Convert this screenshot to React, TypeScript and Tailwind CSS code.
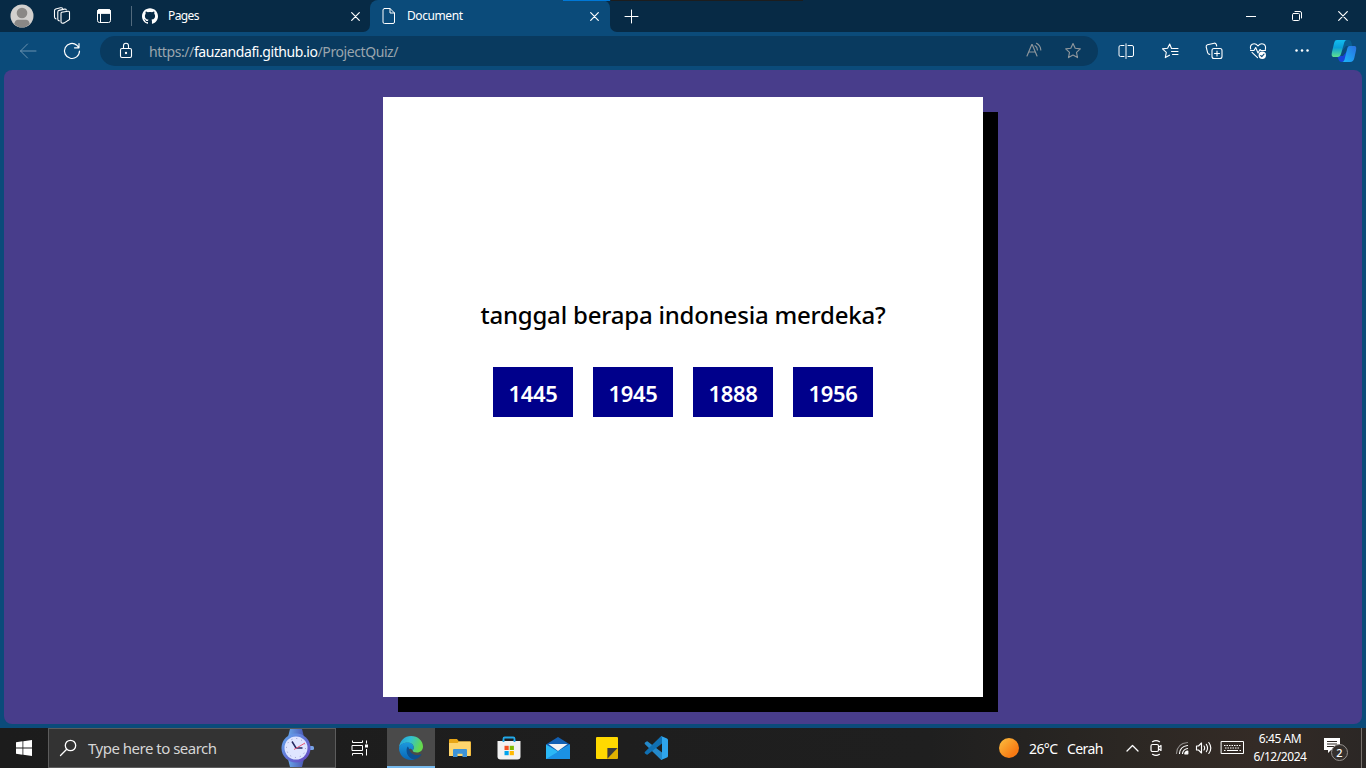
import React from "react";
import { SiGithub } from "react-icons/si";

type IconProps = { w: number; h?: number; className?: string; sw?: number; children: React.ReactNode };

function Icon({ w, h = w, className = "", sw = 1, children }: IconProps) {
  return (
    <svg
      width={w}
      height={h}
      viewBox={`0 0 ${w} ${h}`}
      fill="none"
      stroke="currentColor"
      strokeWidth={sw}
      strokeLinecap="round"
      strokeLinejoin="round"
      className={`block shrink-0 ${className}`}
    >
      {children}
    </svg>
  );
}

function CloseIcon({ size }: { size: number }) {
  return (
    <Icon w={size} sw={1.2}>
      <path d={`M.7.7 ${size - 0.7} ${size - 0.7}M${size - 0.7}.7.7 ${size - 0.7}`} />
    </Icon>
  );
}

function TabStrip() {
  return (
    <div className="flex h-8 bg-[#0b4b7a] text-white">
      <div className="flex h-8 w-[370px] items-center rounded-br-[7px] bg-[#072a45]">
        <div className="flex w-11 justify-center">
          <svg width="24" height="24" viewBox="0 0 24 24" className="block">
            <circle cx="12" cy="12" r="11.5" fill="#d2d0ce" />
            <circle cx="12" cy="9" r="5.3" fill="#8a8886" />
            <path d="M4.2 20.3C4.6 17 6.3 15.8 8 15.8h8c1.7 0 3.4 1.2 3.8 4.5A11.5 11.5 0 0 1 4.2 20.3Z" fill="#8a8886" />
          </svg>
        </div>
        <div className="flex w-9 justify-center">
          <Icon w={18} sw={1.1}>
            <path d="M8.8 5.3 14.8 4.2Q16.5 4 16.5 5.6V12.5L11.3 15.9Q8 16.8 8 14.8V6.5Q8 5.5 8.8 5.3Z" />
            <path d="M6.3 13.9Q4.8 13.6 4.8 12V5Q4.8 3.7 6 3.4L11.5 2.1Q13 1.9 13.3 3" />
            <path d="M3.1 11.9Q1.5 11.4 1.5 10V3.7Q1.5 2.4 2.7 2L7.5.8Q9 .5 9.6 1.3" />
          </Icon>
        </div>
        <div className="flex w-12 justify-center">
          <Icon w={16}>
            <rect x="1.5" y="1.5" width="13" height="13" rx="2" />
            <path d="M1.5 5V3.5a2 2 0 0 1 2-2h9a2 2 0 0 1 2 2V5Z" fill="currentColor" />
            <path d="M4.5 5v9" />
          </Icon>
        </div>
        <div className="ml-[3px] h-5 w-px bg-[#526a7d]" />
        <SiGithub className="ml-2.5 h-4 w-4 shrink-0" />
        <span className="ml-2.5 flex-1 text-[12px] tracking-[-0.6px]">Pages</span>
        <div className="mr-2.5">
          <CloseIcon size={9} />
        </div>
      </div>
      <div className="relative flex h-8 w-60 items-center bg-[linear-gradient(to_bottom,#072a45_50%,#0b4b7a_50%)]">
        <div className="flex h-8 w-full items-center rounded-t-[8px] bg-[#0b4b7a]">
          <Icon w={14} h={18} className="ml-3">
            <path d="M2.5 1.5H8L12.5 6v9a1.500 1.500 0 0 1-1.500 1.500H2.500A1.500 1.500 0 0 1 1 15V3A1.500 1.500 0 0 1 2.500 1.500ZM8 1.500V6h4.500" />
          </Icon>
          <span className="ml-[11px] flex-1 text-[12px] tracking-[-0.42px]">Document</span>
          <div className="mr-[11px]">
            <CloseIcon size={9} />
          </div>
        </div>
        <div className="absolute top-0 right-[-1px] h-px w-12 bg-[#0078d7]" />
      </div>
      <div className="relative flex h-8 flex-1 items-center rounded-bl-[7px] bg-[#072a45]">
        <div className="absolute top-0 left-px h-px w-[192px] bg-[#1d1d1d]" />
        <Icon w={15} className="ml-3.5">
          <path d="M7.5 1v13M1 7.5h13" />
        </Icon>
        <div className="ml-auto flex">
          <div className="flex w-[46px] items-center justify-center">
            <div className="h-px w-2.5 bg-white" />
          </div>
          <div className="flex w-[46px] items-center justify-center">
            <Icon w={12}>
              <rect x="1.5" y="3.5" width="7" height="7" rx="1" />
              <path d="M4 1.500h5a1.500 1.500 0 0 1 1.500 1.500v5" />
            </Icon>
          </div>
          <div className="flex w-[46px] items-center justify-center">
            <CloseIcon size={10} />
          </div>
        </div>
      </div>
    </div>
  );
}

const star = "M9 1.5 11.2 6.3 16.3 6.9 12.5 10.4 13.5 15.6 9 13.1 4.5 15.6 5.5 10.4 1.7 6.9 6.8 6.3Z";

function Toolbar() {
  return (
    <div className="flex h-[38px] items-center bg-[#0b4b7a] text-white">
      <div className="flex w-14 justify-center text-[#6b92af]">
        <Icon w={18}>
          <path d="M17 9H1.500M8.500 2 1.500 9l7 7" />
        </Icon>
      </div>
      <div className="flex w-8 justify-center">
        <Icon w={18} sw={1.2}>
          <path d="M16.500 9A7.500 7.500 0 1 1 13.800 3.200L15.700 5.300M16 1.500v4.300h-4.500" />
        </Icon>
      </div>
      <div className="ml-3 flex h-[30px] w-[998px] items-center rounded-full bg-[#093a5f]">
        <Icon w={14} h={18} className="ml-[19px]" sw={1.1}>
          <rect x="1.5" y="6.5" width="11" height="9" rx="1.5" />
          <path d="M4.500 6.500V3.800a2.500 2.500 0 0 1 5 0v2.700" />
          <circle cx="7" cy="11" r=".6" fill="currentColor" />
        </Icon>
        <span className="ml-4 text-[14px] tracking-[-0.42px] whitespace-nowrap text-[#9aa5ad]">
          https://<span className="text-white">fauzandafi.github.io</span>/ProjectQuiz/
        </span>
        <div className="ml-auto flex pr-[5px] text-[#8e969c]">
          <div className="flex w-10 justify-center pl-px">
            <Icon w={16} sw={1.15}>
              <path d="M1 14 5.800 2.500h.4L11 14M2.800 10h6.400M9 3.800Q11.300 5 11.400 8M10.500 1.300Q14.500 3.500 14.800 8" />
            </Icon>
          </div>
          <div className="flex w-10 justify-center">
            <Icon w={18} sw={1.15}>
              <path d={star} />
            </Icon>
          </div>
        </div>
      </div>
      <div className="flex items-center pl-1.5">
        <div className="flex w-11 justify-center">
          <Icon w={17} h={16}>
            <path d="M6 2.500H2.500A1.500 1.500 0 0 0 1 4v8a1.500 1.500 0 0 0 1.500 1.500H6M10 2.500h4A1.500 1.500 0 0 1 15.500 4v8a1.500 1.500 0 0 1-1.500 1.500h-4M8 .8v14.700" />
          </Icon>
        </div>
        <div className="flex w-11 justify-center">
          <Icon w={18} sw={1.1}>
            <path d="M10.500 6.500 8.700 2 6.600 6.300 1.500 6.900 5.300 10.400 4.300 15.600 8.500 13.200M11.500 6.500h5.500M10.500 9.500H17M11.500 12.500H17" />
          </Icon>
        </div>
        <div className="flex w-11 justify-center">
          <Icon w={18} sw={1.1}>
            <rect x="7" y="6.5" width="10" height="10" rx="2" />
            <path d="M12 9v5M9.500 11.500h5M4.700 12.400Q3 12.300 2.600 10.700L1.200 5Q.9 3.300 2.500 2.800L9.200 1.200Q10.800 1 11.300 2.500L11.700 4" />
          </Icon>
        </div>
        <div className="flex w-11 justify-center">
          <Icon w={18} h={18} sw={1.1}>
            <path d="M1.700 7Q.7 3.800 3.200 2.200 6.200.7 9 3.800 11.800.7 14.800 2.200 17.300 3.800 16.300 7.500M3 10.300 8.500 15.700M1.500 8.500H5L6.700 5.500 9 11 11 7.500 12 8.500h4.500" />
            <circle cx="13.300" cy="13.300" r="3.700" fill="white" stroke="none" />
            <path d="m11.700 13.500 1.100 1.100L15 12.100" stroke="#0b4b7a" />
          </Icon>
        </div>
        <div className="flex w-11 justify-center">
          <Icon w={16}>
            <g fill="white" stroke="none">
              <circle cx="2.5" cy="7.5" r="1.25" />
              <circle cx="8" cy="7.5" r="1.25" />
              <circle cx="13.5" cy="7.5" r="1.25" />
            </g>
          </Icon>
        </div>
        <div className="flex w-10 justify-center">
          <svg width="26" height="24" viewBox="0 0 26 24" className="block">
            <defs>
              <linearGradient id="cpA" x1="0" y1="0" x2="0" y2="1">
                <stop offset="0" stopColor="#12bdf0" />
                <stop offset=".45" stopColor="#0a9fd8" />
                <stop offset="1" stopColor="#5fe08d" />
              </linearGradient>
              <linearGradient id="cpB" x1="1" y1="0" x2="0" y2="1">
                <stop offset="0" stopColor="#2a6fe0" />
                <stop offset="1" stopColor="#19b8fb" />
              </linearGradient>
            </defs>
            <path d="M13 1h4.500c2 0 2.500 1.200 3 3l.8 3H15L11 12Z" fill="#0a5d90" />
            <path d="M6 17h6l5-6-2 8c-.8 3-2 4-4 4-2.500 0-3-1-3.600-3Z" fill="#1745d8" />
            <path d="M6 1h9.800c-1.500 0-2.300 1.500-2.800 3.500l-2.700 9.500c-.7 2.500-1.700 4-3.800 4H3c-2.700 0-2.500-2.500-2-5L3 4.500C3.600 2 4.300 1 6 1Z" fill="url(#cpA)" />
            <path d="M18.500 7H23c2.500 0 2.500 2 2 4.500L23.300 19c-.6 2.500-1.800 4-4.300 4h-8c1.500 0 2.300-1.500 2.800-3.500L16 10.500C16.500 8.500 17 7 18.500 7Z" fill="url(#cpB)" />
          </svg>
        </div>
      </div>
    </div>
  );
}

function QuizPage() {
  const answers = ["1445", "1945", "1888", "1956"];
  return (
    <div className="flex flex-1 bg-[#0b4b7a] px-1 pb-1">
      <div className="flex flex-1 justify-center rounded-[8px] bg-[#483d8b] pt-[27px]">
        <div className="flex h-[600px] w-[600px] flex-col items-center bg-white pt-[198px] shadow-[15px_15px_0_#000]">
          <h1 className="flex h-10 items-center text-[24px] font-medium tracking-[-0.2px] whitespace-nowrap text-black">
            tanggal berapa indonesia merdeka?
          </h1>
          <div className="mt-8 flex gap-5">
            {answers.map((a) => (
              <button key={a} className="flex h-[50px] w-20 items-center justify-center bg-[#00008b] pt-0.5 text-[22px] font-semibold tracking-[-0.35px] text-white">
                {a}
              </button>
            ))}
          </div>
        </div>
      </div>
    </div>
  );
}

function WatchArt() {
  return (
    <svg width="34" height="38" viewBox="0 0 34 38" className="block">
      <defs>
        <linearGradient id="wr" x1="0" y1="0" x2="1" y2="1">
          <stop offset="0" stopColor="#62a9f0" />
          <stop offset="1" stopColor="#6541bd" />
        </linearGradient>
        <linearGradient id="ws" x1="0" y1="0" x2="1" y2="0">
          <stop offset="0" stopColor="#67a5e8" />
          <stop offset="1" stopColor="#4b57b4" />
        </linearGradient>
      </defs>
      <path d="M9 0h12l2 8H7ZM7 30h16l-2 8H9Z" fill="url(#ws)" />
      <rect x="28" y="17" width="5" height="4" rx="1.5" fill="#78a3e7" />
      <circle cx="15" cy="19" r="14.5" fill="url(#wr)" />
      <circle cx="15" cy="19" r="11.5" fill="#dfe5ff" />
      <circle cx="15" cy="19" r="9.5" fill="none" stroke="#8e91c4" strokeDasharray="1 3.97" />
      <path d="m11 12.500 4 6.500h6.500" fill="none" stroke="#252860" strokeWidth="1.5" />
      <path d="M13 20.500 24 14" stroke="#ea5575" />
    </svg>
  );
}

function EdgeLogo() {
  return (
    <svg width="24" height="24" viewBox="0 0 24 24" className="block">
      <defs>
        <linearGradient id="eg" x1="0" y1="0" x2="1" y2=".3">
          <stop offset="0" stopColor="#249bd9" />
          <stop offset=".5" stopColor="#31c1d3" />
          <stop offset="1" stopColor="#65d94d" />
        </linearGradient>
        <linearGradient id="eb" x1="0" y1="0" x2="0" y2="1">
          <stop offset="0" stopColor="#1c98dd" />
          <stop offset="1" stopColor="#0866b5" />
        </linearGradient>
      </defs>
      <path d="M0 11.500C.6 4.800 5.700 0 12 0c7 0 12 5 12 10.500 0 3.700-2.700 6-6 6-2.800 0-4.300-1-4.300-2 0-.7 1-1.200 1-3 0-2.800-2.500-4.800-6-4.800C4.500 6.700 1 8.800 0 11.500Z" fill="url(#eg)" />
      <path d="M0 12C.5 8.600 4.300 6.500 8.500 6.500c3.500 0 6.200 2 6.200 5 0 1.500-.8 2.300-1 3-1.500-2.600-4.700-2.200-5.200 1C8 19 11.500 23.500 16 23.300c-1 .5-2.500.7-4 .7C5 24 0 18.500 0 12Z" fill="url(#eb)" />
      <path d="M8.700 10.500C6 14 8 22.500 15.500 23.500c3-.6 5.500-2.500 6.800-4.700.3-.5 0-.8-.5-.5-4 2-8.800.5-10.800-3-1-1.800-.8-3.500-2.300-4.800Z" fill="#0d4f91" />
    </svg>
  );
}

function Taskbar() {
  return (
    <div className="flex h-10 bg-[linear-gradient(to_right,#1c1c1c_0%,#1f1f1f_68%,#2b2723_82%,#342b26_92%,#2b2725_100%)] text-white">
      <div className="flex w-12 items-center justify-center">
        <svg width="16" height="16" viewBox="0 0 16 16" fill="white" className="block">
          <path d="M0 2.200 6.500 1.300V7.500H0ZM7.300 1.200 16 0V7.500H7.300ZM0 8.400h6.500v6.300L0 13.800ZM7.300 8.400H16V16l-8.700-1.200Z" />
        </svg>
      </div>
      <div className="flex w-72 items-center border border-[#5c5c5c] bg-[#333333]">
        <Icon w={18} className="ml-2.5" sw={1.3}>
          <circle cx="11.5" cy="6.5" r="5.2" />
          <path d="M7.700 10.300 1.500 16.500" />
        </Icon>
        <span className="ml-[11px] flex-1 text-[15px] tracking-[-0.5px] whitespace-nowrap text-[#d6d6d6]">Type here to search</span>
        <div className="mr-5">
          <WatchArt />
        </div>
      </div>
      <div className="flex w-[51px] items-center justify-center pr-[3px]">
        <Icon w={18} h={16}>
          <g strokeLinecap="square" strokeLinejoin="miter">
            <path d="M1.500 1v1.500h10V1M1.500 15v-1.500h10V15M1.500 5.500h10v5h-10ZM15.500 1v2M15.500 9.500V15" />
            <rect x="14.5" y="5" width="2" height="2" fill="white" />
          </g>
        </Icon>
      </div>
      <div className="flex gap-px">
        <div className="flex w-12 items-center justify-center border-b-2 border-[#76b9ed] bg-[#4a4a4a] pt-0.5">
          <EdgeLogo />
        </div>
        <div className="flex w-12 items-center justify-center">
          <svg width="22" height="18" viewBox="0 0 22 18" className="block">
            <path d="M0 1Q0 0 1 0h7l2 2.500h11q1 0 1 1V16q0 1-1 1H1q-1 0-1-1Z" fill="#e8a515" />
            <path d="M0 4h8.500L10 2.500h11.500V17H0Z" fill="#fed56d" />
            <path d="M4 17.900V11q0-1 1-1h12q1 0 1 1v6.900h-4.500v-3.200h-5v3.200Z" fill="#3d93d7" />
          </svg>
        </div>
        <div className="flex w-12 items-center justify-center">
          <svg width="24" height="24" viewBox="0 0 24 24" className="block">
            <path d="M6.500 6V2.800Q6.500 1.500 7.800 1.500h8.400q1.300 0 1.300 1.300V6" fill="none" stroke="#22a9e9" strokeWidth="1.800" />
            <path d="M.5 5h23v15.500q0 3-3 3h-17q-3 0-3-3Z" fill="#f1f1f1" />
            <path d="M6.500 6V4.500M17.500 6V4.500" stroke="#22a9e9" strokeWidth="1.800" />
            <path d="M7.500 9.800h4.200V14H7.500Z" fill="#f25022" />
            <path d="M12.700 9.800h4.200V14h-4.200Z" fill="#7fba00" />
            <path d="M7.500 15h4.200v4.200H7.500Z" fill="#00a4ef" />
            <path d="M12.700 15h4.200v4.200h-4.200Z" fill="#ffb900" />
          </svg>
        </div>
        <div className="flex w-12 items-center justify-center">
          <svg width="24" height="24" viewBox="0 0 24 24" className="block">
            <path d="M0 8.500 12 1l12 7.500V15H0Z" fill="#1260b3" />
            <path d="M0 8.500 12 15.500 24 8.500V23H0Z" fill="#2bb8f5" />
            <path d="M0 23 24 8.500V23Z" fill="#1b91e3" />
            <path d="M2.500 8h19L12 15Z" fill="#f3f3f3" />
          </svg>
        </div>
        <div className="flex w-12 items-center justify-center">
          <svg width="22" height="22" viewBox="0 0 22 22" className="block">
            <path d="M1 0h20q1 0 1 1v10L11 22H1q-1 0-1-1V1Q0 0 1 0Z" fill="#ffd900" />
            <path d="M11 11h11v10q0 1-1 1H11Z" fill="#dfb000" />
            <path d="M11.500 11H21.500L11.500 21.500Z" fill="#3b3b3b" />
          </svg>
        </div>
        <div className="flex w-12 items-center justify-center">
          <svg width="24" height="24" viewBox="0 0 24 24" className="block">
            <path d="M1 6.600 2.500 5.500q.6-.4 1.200 0L18 16.600V24q-1 0-1.600-.7L.8 8q-.5-.8.2-1.400Z" fill="#2489ca" />
            <path d="M1 17.400 2.500 18.500q.6.4 1.200 0L18 7.400V0q-1 0-1.600.7L.8 16q-.5.8.2 1.400Z" fill="#1070b3" />
            <path d="M16.500.7Q17.300 0 18.300.4L23 2.600q1 .5 1 1.500v15.800q0 1-1 1.500l-4.700 2.200q-1 .4-1.800-.3 1.500.5 1.500-1.300V2q0-1.800-1.500-1.300Z" fill="#2ea5ed" />
          </svg>
        </div>
      </div>
      <div className="ml-auto flex items-center">
        <div className="h-5 w-5 rounded-full bg-[linear-gradient(135deg,#fbb73b_10%,#f77a13_75%)]" />
        <span className="ml-2.5 w-[38px] text-[14px] tracking-[-0.6px] whitespace-nowrap">26°C</span>
        <span className="w-[53px] text-[14px] tracking-[-0.6px]">Cerah</span>
        <div className="flex w-6 justify-center">
          <Icon w={13} h={8} sw={1.3}>
            <path d="m1 7 5.500-5.500L12 7" />
          </Icon>
        </div>
        <div className="flex w-6 justify-center">
          <Icon w={14} h={18} sw={1.2}>
            <rect x="2" y="5.5" width="7.5" height="7" rx="1.5" />
            <path d="m9.500 8.200 2.500-1.700v5L9.500 9.800M3.500 2.700Q7 .5 10.500 2.700M3.500 15.300Q7 17.500 10.500 15.300" />
          </Icon>
        </div>
        <div className="flex w-[25px] justify-center pl-0.5">
          <Icon w={14} sw={1.2}>
            <path d="M1.500 12.500Q2 2.500 12.500 1.500" stroke="#8d8a88" />
            <path d="M4.500 12.500Q5 5.500 12.500 4.500M7.500 12.500Q8 8.500 12.500 7.500" />
            <path d="M9.800 12.800Q10 10.500 12.800 10.200v2.600Z" fill="currentColor" />
          </Icon>
        </div>
        <div className="flex w-[22px] justify-center">
          <Icon w={18} h={14} sw={1.15}>
            <path d="M1.500 5h2l3-3v10l-3-3h-2ZM9 5q1.300 2 0 4M11.300 3.300q2.500 3.700 0 7.400M13.800 1.500q4 5.500 0 11" />
          </Icon>
        </div>
        <div className="flex w-[34px] justify-center">
          <Icon w={24} h={14}>
            <rect x="1.5" y=".5" width="22" height="12" />
            <path d="M4 4.500h17M5 7h15" strokeDasharray="1.500 1" strokeLinecap="butt" />
            <path d="M4 9.500h1.500M7 9.500h11M19.500 9.500H21" strokeLinecap="butt" />
          </Icon>
        </div>
        <div className="flex w-[62px] flex-col items-center text-[12px] leading-[18px] whitespace-nowrap">
          <span className="tracking-[-0.42px]">6:45 AM</span>
          <span className="tracking-[-0.45px]">6/12/2024</span>
        </div>
        <div className="ml-3 flex w-6 justify-center">
          <div className="relative h-6 w-6">
            <svg width="18" height="18" viewBox="0 0 18 18" className="block">
              <path d="M1 2h16v12H8l-3 3v-3H1Z" fill="white" />
              <path d="M4 5.500h10M4 8h10M4 10.500h7" stroke="#2f2925" />
            </svg>
            <div className="absolute top-2 left-2 flex h-[17px] w-[17px] items-center justify-center rounded-full border border-[#96918e] bg-[#35302d] text-[11px] leading-none font-medium">2</div>
          </div>
        </div>
        <div className="ml-[14px] h-10 w-px bg-[#77716d]" />
        <div className="w-1" />
      </div>
    </div>
  );
}

export default function App() {
  return (
    <div className="flex h-[768px] w-[1366px] flex-col overflow-hidden font-['Noto_Sans','Open_Sans',sans-serif]">
      <TabStrip />
      <Toolbar />
      <QuizPage />
      <Taskbar />
    </div>
  );
}
